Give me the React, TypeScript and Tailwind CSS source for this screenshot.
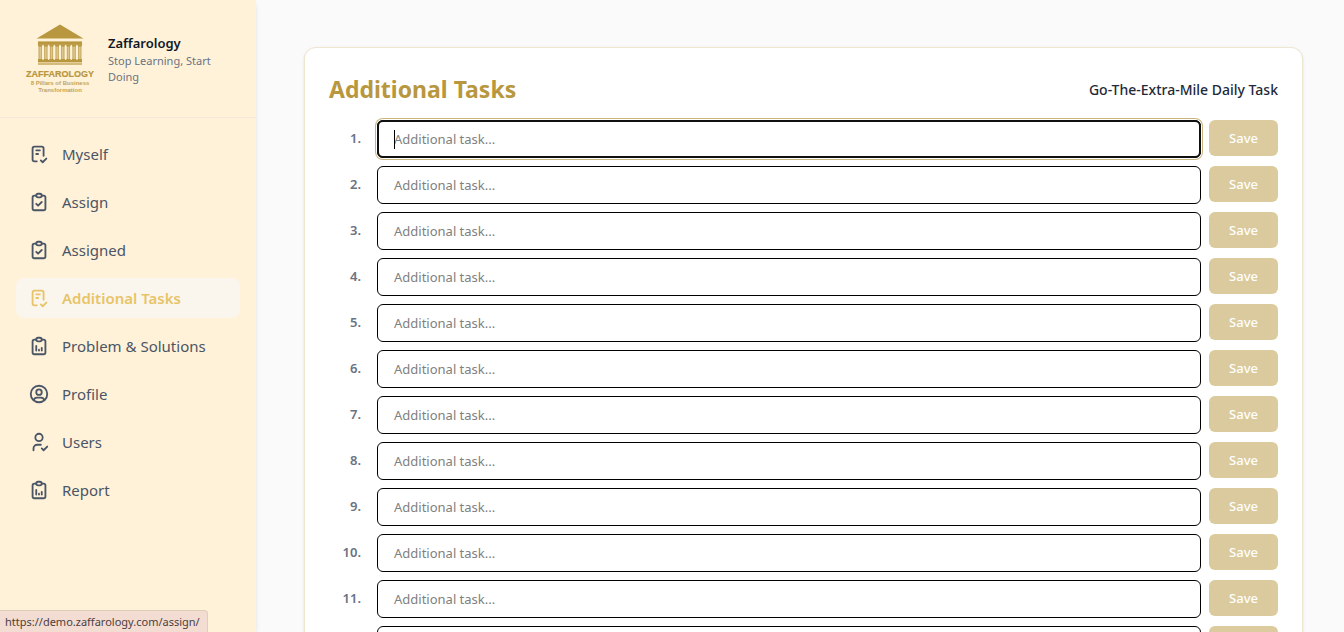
import { useState } from "react";
import type { IconType } from "react-icons";
import {
  TbChecklist,
  TbClipboardCheck,
  TbReportAnalytics,
  TbUserCheck,
  TbUserCircle,
} from "react-icons/tb";

type NavItem = { label: string; icon: IconType; href: string };

const NAV_ITEMS: NavItem[] = [
  { label: "Myself", icon: TbChecklist, href: "#myself" },
  { label: "Assign", icon: TbClipboardCheck, href: "#assign" },
  { label: "Assigned", icon: TbClipboardCheck, href: "#assigned" },
  { label: "Additional Tasks", icon: TbChecklist, href: "#additional-tasks" },
  { label: "Problem & Solutions", icon: TbReportAnalytics, href: "#problems" },
  { label: "Profile", icon: TbUserCircle, href: "#profile" },
  { label: "Users", icon: TbUserCheck, href: "#users" },
  { label: "Report", icon: TbReportAnalytics, href: "#report" },
];

const ACTIVE = "Additional Tasks";
const TASK_COUNT = 12;

function Logo() {
  const columns = Array.from({ length: 8 }, (_, i) => 14.6 + i * 5.65);
  return (
    <svg viewBox="0 0 72 69" className="h-[69px] w-[72px] shrink-0" fill="#b8973e" aria-hidden="true">
      <path d="M36 0.4 59.4 14.4H12.6Z" />
      <rect x="14" y="17.4" width="44" height="3.4" />
      {columns.map((x) => (
        <g key={x}>
          <path d={`M${x - 1} 20.6h5.2l-1 2h-3.2z`} />
          <rect x={x} y="22" width="3.2" height="14" opacity="0.5" />
          <rect x={x} y="22" width="0.8" height="14" opacity="0.7" />
          <rect x={x + 2.4} y="22" width="0.8" height="14" opacity="0.7" />
          <rect x={x - 0.5} y="35" width="4.2" height="1.2" />
        </g>
      ))}
      <rect x="14" y="35.8" width="44" height="2.6" />
      <rect x="14" y="39.4" width="44" height="1.2" />
      <g textAnchor="middle" fontFamily="Liberation Sans, Arial, sans-serif" fontWeight="700">
        <text x="36" y="53" fontSize="9" stroke="#b8973e" strokeWidth="0.2">ZAFFAROLOGY</text>
        <text x="36" y="61" fontSize="6" opacity="0.85">8 Pillars of Business</text>
        <text x="36" y="68" fontSize="6" opacity="0.85">Transformation</text>
      </g>
    </svg>
  );
}

function Sidebar() {
  return (
    <aside className="z-10 flex w-64 shrink-0 flex-col bg-[#fff2d9] shadow-md">
      <div className="flex items-center gap-3 border-b border-[#f3e8d8] px-6 py-6">
        <Logo />
        <div className="min-w-0">
          <p className="text-[13px] leading-5 font-semibold text-gray-900">Zaffarology</p>
          <p className="text-[11px] leading-4 text-gray-500">Stop Learning, Start Doing</p>
        </div>
      </div>
      <nav className="flex flex-col gap-2 px-4 py-4">
        {NAV_ITEMS.map(({ label, icon: Icon, href }) => (
          <a
            key={label}
            href={href}
            aria-current={label === ACTIVE ? "page" : undefined}
            className={
              label === ACTIVE
                ? "flex h-10 items-center gap-3 rounded-lg bg-[#faf6ee] px-3 text-[15px] font-semibold text-[#e8c468]"
                : "flex h-10 items-center gap-3 rounded-lg px-3 text-[15px] text-gray-600"
            }
          >
            <Icon size={22} className="shrink-0" />
            {label}
          </a>
        ))}
      </nav>
    </aside>
  );
}

function TaskRow({ index }: { index: number }) {
  const [value, setValue] = useState("");
  const id = `task-${index}`;
  return (
    <li className="flex items-start gap-2">
      <label htmlFor={id} className="mr-2 w-8 text-right text-[13px] leading-9 font-semibold text-gray-500">
        {index}.
      </label>
      <div className="relative flex min-w-0 flex-1">
        <input
          id={id}
          type="text"
          autoFocus={index === 1}
          value={value}
          onChange={(e) => setValue(e.target.value)}
          placeholder="Additional task..."
          className="peer h-[38px] min-w-0 flex-1 rounded-md border border-black bg-white px-4 text-[13px] text-gray-900 placeholder-shown:caret-transparent placeholder:text-[#808080] focus:shadow-[0_0_0_1px_#ffffff,0_0_0_2px_#c9b57c] focus:outline-2 focus:-outline-offset-2 focus:outline-[#101010]"
        />
        {/* Caret shown while the focused field is empty */}
        <span
          aria-hidden="true"
          className="pointer-events-none absolute top-[10px] left-[17px] hidden h-[19px] w-px bg-black peer-placeholder-shown:peer-focus:block"
        />
      </div>
      <button
        type="button"
        disabled={!value}
        className="h-9 w-[69px] rounded-md bg-[#b8973e] pt-[2px] text-[13px] font-medium text-white disabled:opacity-50"
      >
        Save
      </button>
    </li>
  );
}

export default function App() {
  return (
    <div className="relative flex h-screen overflow-hidden bg-[#fafafa] font-['Noto_Sans','Open_Sans',sans-serif]">
      <Sidebar />
      <main className="flex-1 overflow-y-auto pt-[47px] pr-[41px] pb-12 pl-12 [scrollbar-width:none]">
        <section className="rounded-xl border border-[#efe6d0] bg-white p-6 shadow-sm">
          <header className="mb-[14px] flex h-[34px] items-center justify-between">
            <h1 className="text-[23px] font-bold text-[#b8973e]">Additional Tasks</h1>
            <p className="text-[14px] font-medium text-gray-800">Go-The-Extra-Mile Daily Task</p>
          </header>
          <ol className="flex flex-col gap-2">
            {Array.from({ length: TASK_COUNT }, (_, i) => (
              <TaskRow key={i} index={i + 1} />
            ))}
          </ol>
        </section>
      </main>
      <div className="absolute bottom-0 left-0 z-20 rounded-tr border-t border-r border-[#e0cdb8] bg-[#f3dcd2] py-[2px] pr-[7px] pl-[5px] text-[11px] leading-[17px] text-[#4d403c]">
        https://demo.zaffarology.com/assign/
      </div>
    </div>
  );
}
